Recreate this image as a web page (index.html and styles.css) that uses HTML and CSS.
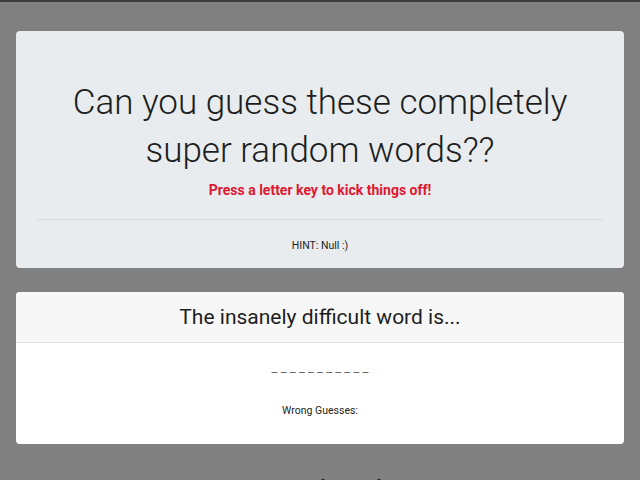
FILE: index.html
```html
<!DOCTYPE html>
<html>
<head>
<meta charset="utf-8">
<link rel="stylesheet" href="styles.css">
</head>
<body>
<div class="topbar"></div>
<main class="page">
  <section class="jumbo">
    <h1 class="title">Can you guess these completely super random words??</h1>
    <p class="prompt">Press a letter key to kick things off!</p>
    <hr class="rule">
    <p class="hint">HINT: Null :)</p>
  </section>
  <section class="card">
    <div class="card-header">The insanely difficult word is...</div>
    <div class="card-body">
      <p class="word">_ _ _ _ _ _ _ _ _ _ _</p>
      <p class="wrong">Wrong Guesses:</p>
    </div>
  </section>
  <h2 class="score">Scoreboard</h2>
</main>
</body>
</html>
```

FILE: styles.css
```css
html, body {
  margin: 0;
  padding: 0;
}
body {
  background: #808080;
  font-family: Roboto, "Noto Sans", sans-serif;
  color: #1c1e21;
  height: 480px;
  overflow: hidden;
}
.topbar {
  height: 2px;
  background: #3a3e42;
}
.page {
  padding: 29px 16px 0;
  text-align: center;
}
.jumbo {
  background: #e9ecef;
  border-radius: 4px;
  padding: 48px 21px 13px;
}
.title {
  margin: 0 auto;
  font-weight: 300;
  font-size: 35px;
  line-height: 48px;
  max-width: 520px;
}
.prompt {
  margin: 5px 0 0;
  color: #e0182f;
  font-weight: 700;
  font-size: 14px;
  line-height: 21px;
}
.rule {
  margin: 18px 0 0;
  border: 0;
  border-top: 1px solid #d9dcdf;
}
.hint {
  margin: 17px 0 0;
  font-size: 10.5px;
  line-height: 18px;
}
.card {
  margin-top: 24px;
  background: #fff;
  border-radius: 4px;
  overflow: hidden;
}
.card-header {
  background: #f7f7f7;
  border-bottom: 1px solid #dfdfdf;
  font-size: 21px;
  line-height: 29px;
  padding: 11px 0 10px;
}
.card-body {
  padding: 15px 0 25px;
}
.word {
  margin: 0;
  font-size: 13px;
  line-height: 20px;
  color: #6a6a6a;
}
.wrong {
  margin: 25px 0 0;
  font-size: 10.5px;
  line-height: 16px;
}
.score {
  margin: 30px 0 0;
  font-size: 24px;
  font-weight: 500;
  line-height: 30px;
}
```
